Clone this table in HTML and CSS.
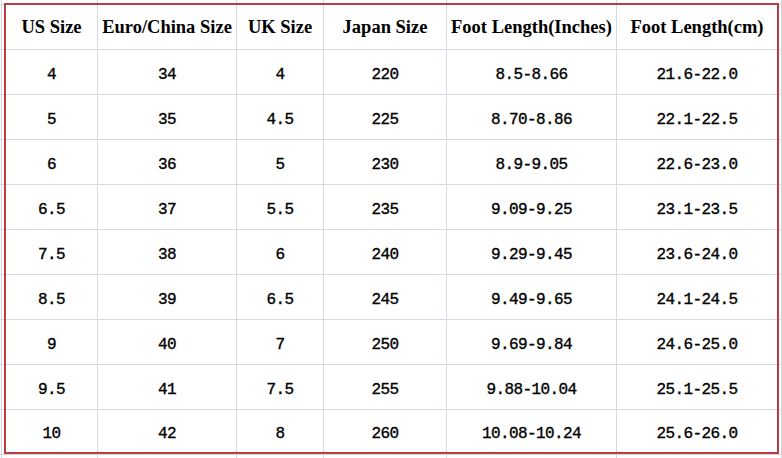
FILE: index.html
```html
<!DOCTYPE html>
<html lang="en">
<head>
<meta charset="utf-8">
<title>Shoe Size Chart</title>
<link rel="stylesheet" href="styles.css">
</head>
<body>
<div class="sheet">
  <div class="cell head">US Size</div>
  <div class="cell head">Euro/China Size</div>
  <div class="cell head">UK Size</div>
  <div class="cell head">Japan Size</div>
  <div class="cell head">Foot Length(Inches)</div>
  <div class="cell head">Foot Length(cm)</div>

  <div class="cell">4</div><div class="cell">34</div><div class="cell">4</div><div class="cell">220</div><div class="cell">8.5-8.66</div><div class="cell">21.6-22.0</div>
  <div class="cell">5</div><div class="cell">35</div><div class="cell">4.5</div><div class="cell">225</div><div class="cell">8.70-8.86</div><div class="cell">22.1-22.5</div>
  <div class="cell">6</div><div class="cell">36</div><div class="cell">5</div><div class="cell">230</div><div class="cell">8.9-9.05</div><div class="cell">22.6-23.0</div>
  <div class="cell">6.5</div><div class="cell">37</div><div class="cell">5.5</div><div class="cell">235</div><div class="cell">9.09-9.25</div><div class="cell">23.1-23.5</div>
  <div class="cell">7.5</div><div class="cell">38</div><div class="cell">6</div><div class="cell">240</div><div class="cell">9.29-9.45</div><div class="cell">23.6-24.0</div>
  <div class="cell">8.5</div><div class="cell">39</div><div class="cell">6.5</div><div class="cell">245</div><div class="cell">9.49-9.65</div><div class="cell">24.1-24.5</div>
  <div class="cell">9</div><div class="cell">40</div><div class="cell">7</div><div class="cell">250</div><div class="cell">9.69-9.84</div><div class="cell">24.6-25.0</div>
  <div class="cell">9.5</div><div class="cell">41</div><div class="cell">7.5</div><div class="cell">255</div><div class="cell">9.88-10.04</div><div class="cell">25.1-25.5</div>
  <div class="cell">10</div><div class="cell">42</div><div class="cell">8</div><div class="cell">260</div><div class="cell">10.08-10.24</div><div class="cell">25.6-26.0</div>
</div>
</body>
</html>
```
FILE: styles.css
```css
html, body {
  margin: 0;
  padding: 0;
}

body {
  width: 782px;
  height: 458px;
  overflow: hidden;
  background-color: #ffffff;
  background-image:
    repeating-linear-gradient(to bottom, transparent 0 4px, #d4dae4 4px 5px, transparent 5px 45px),
    linear-gradient(#d4dae4, #d4dae4),
    linear-gradient(#d4dae4, #d4dae4),
    linear-gradient(#d4dae4, #d4dae4),
    linear-gradient(#d4dae4, #d4dae4),
    linear-gradient(#d4dae4, #d4dae4),
    linear-gradient(#d4dae4, #d4dae4),
    linear-gradient(#d4dae4, #d4dae4);
  background-size:
    100% 100%,
    1px 100%, 1px 100%, 1px 100%, 1px 100%, 1px 100%, 1px 100%, 1px 100%;
  background-position:
    0 0,
    1px 0, 97px 0, 236px 0, 323px 0, 446px 0, 616px 0, 781px 0;
  background-repeat: no-repeat;
}

.sheet {
  display: grid;
  grid-template-columns: 92px 139px 87px 123px 170px 160px;
  grid-template-rows: repeat(9, 45px) 42px;
  width: max-content;
  margin: 3px 0 0 4px;
  border: 2px solid #bd3b41;
  background: #ffffff;
  font-family: "Liberation Mono", "Courier New", monospace;
  font-size: 16px;
  letter-spacing: -0.6px;
  color: #000000;
}

.cell {
  box-sizing: border-box;
  display: flex;
  align-items: center;
  justify-content: center;
  padding-top: 5px;
  border-right: 1px solid #d4dae4;
  border-bottom: 1px solid #d4dae4;
  white-space: nowrap;
  -webkit-text-stroke: 0.35px #000000;
}

.cell:nth-child(6n) {
  border-right: none;
}

.cell:nth-last-child(-n+6) {
  border-bottom: none;
}

.head {
  padding-top: 0;
  font-family: "Liberation Serif", "Times New Roman", serif;
  font-size: 18.5px;
  letter-spacing: 0;
  font-weight: bold;
  -webkit-text-stroke: 0;
}
```
